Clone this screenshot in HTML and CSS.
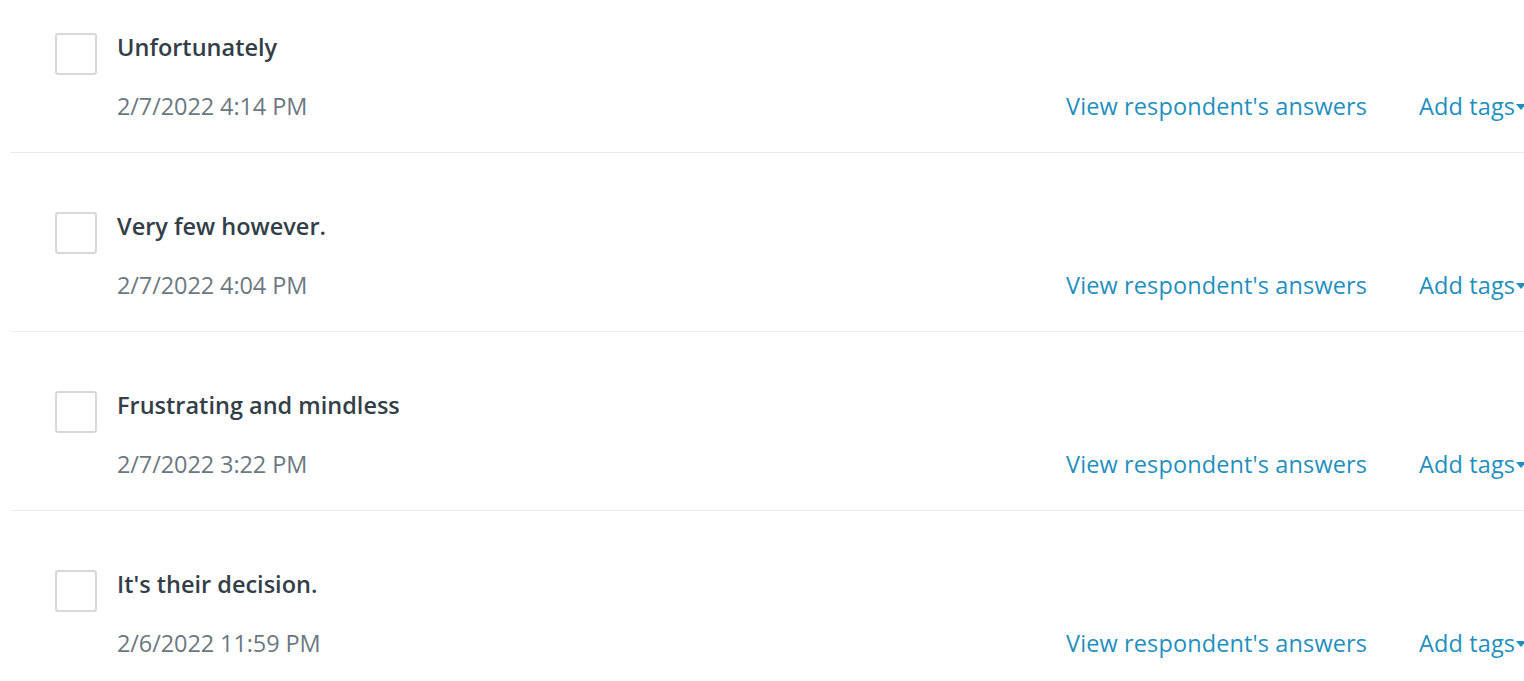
FILE: index.html
```html
<!DOCTYPE html>
<html lang="en">
<head>
<meta charset="utf-8">
<title>Responses</title>
<link rel="stylesheet" href="styles.css">
</head>
<body>
<div class="list">
  <div class="row">
    <span class="check"></span>
    <div class="body">
      <div class="title">Unfortunately</div>
      <div class="meta">
        <span class="date">2/7/2022 4:14 PM</span>
        <a class="link" href="#">View respondent's answers</a>
        <a class="link tags" href="#">Add tags<svg class="caret" viewBox="0 0 10 6" width="10" height="6"><path d="M0 0h10L5 6z"/></svg></a>
      </div>
    </div>
  </div>
  <div class="row">
    <span class="check"></span>
    <div class="body">
      <div class="title">Very few however.</div>
      <div class="meta">
        <span class="date">2/7/2022 4:04 PM</span>
        <a class="link" href="#">View respondent's answers</a>
        <a class="link tags" href="#">Add tags<svg class="caret" viewBox="0 0 10 6" width="10" height="6"><path d="M0 0h10L5 6z"/></svg></a>
      </div>
    </div>
  </div>
  <div class="row">
    <span class="check"></span>
    <div class="body">
      <div class="title">Frustrating and mindless</div>
      <div class="meta">
        <span class="date">2/7/2022 3:22 PM</span>
        <a class="link" href="#">View respondent's answers</a>
        <a class="link tags" href="#">Add tags<svg class="caret" viewBox="0 0 10 6" width="10" height="6"><path d="M0 0h10L5 6z"/></svg></a>
      </div>
    </div>
  </div>
  <div class="row">
    <span class="check"></span>
    <div class="body">
      <div class="title">It's their decision.</div>
      <div class="meta">
        <span class="date">2/6/2022 11:59 PM</span>
        <a class="link" href="#">View respondent's answers</a>
        <a class="link tags" href="#">Add tags<svg class="caret" viewBox="0 0 10 6" width="10" height="6"><path d="M0 0h10L5 6z"/></svg></a>
      </div>
    </div>
  </div>
</div>
</body>
</html>
```
FILE: styles.css
```css
html, body {
  margin: 0;
  padding: 0;
  background: #ffffff;
  overflow: hidden;
}
body {
  font-family: "Open Sans", "Liberation Sans", sans-serif;
  font-size: 23.5px;
}
.list {
  margin-left: 10px;
  width: 1600px;
}
.row {
  display: flex;
  gap: 20px;
  padding: 59px 0 34px 45px;
  border-bottom: 1px solid #ececec;
}
.row:first-child {
  padding-top: 33px;
}
.check {
  flex: none;
  width: 42px;
  height: 42px;
  box-sizing: border-box;
  border: 2px solid #d6d8d9;
  border-radius: 3px;
  background: #fff;
}
.body {
  flex: 1;
}
.title {
  padding-top: 2px;
  line-height: 24px;
  font-weight: 600;
  color: #333e48;
}
.meta {
  margin-top: 35px;
  line-height: 24px;
  display: grid;
  grid-template-columns: 897px auto auto;
  justify-content: start;
  column-gap: 52px;
}
.date {
  color: #6b787f;
  letter-spacing: -0.1px;
}
.link {
  color: #1f8fbd;
  text-decoration: none;
  white-space: nowrap;
  letter-spacing: 0.12px;
}
.caret {
  fill: #1f8fbd;
  margin-left: 1px;
  vertical-align: 5px;
}
```
